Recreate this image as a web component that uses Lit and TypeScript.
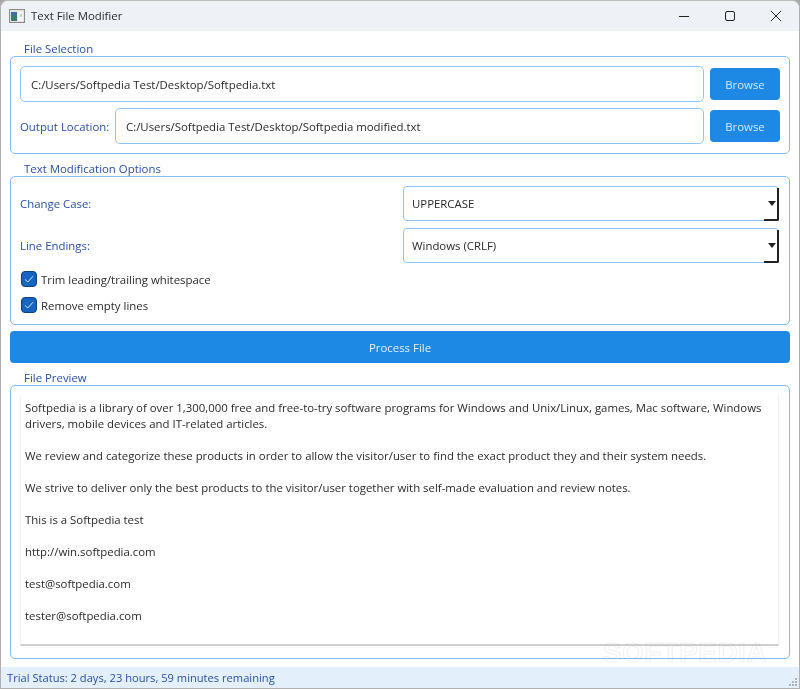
import { LitElement, html, css } from 'lit';
import { customElement } from 'lit/decorators.js';

const check = html`<svg width="16" height="16" viewBox="0 0 16 16"><path d="M4 8.4 L6.8 11 L12 5.2" fill="none" stroke="#cfe4f8" stroke-width="1"/></svg>`;
const arrow = html`<svg class="arrow" width="8" height="5" viewBox="0 0 8 5"><path d="M0 0 H8 L4 5 Z" fill="#222"/></svg>`;

@customElement('app-root')
export class AppRoot extends LitElement {
  static styles = css`
    :host {
      display: block;
      width: 800px;
      height: 689px;
      background: #a9a9a9;
      font-family: "Open Sans", "Noto Sans", sans-serif;
      font-size: 11.4px;
      color: #2b2b33;
    }
    .window {
      position: relative;
      box-sizing: border-box;
      height: 689px;
      display: flex;
      flex-direction: column;
      background: #fff;
      border: 1px solid #b0b0b0;
      border-top-color: #bdbdbd;
      border-radius: 8px 8px 0 0;
      overflow: hidden;
    }
    .titlebar {
      box-sizing: border-box;
      height: 30px;
      flex: none;
      display: flex;
      align-items: center;
      background: #eef2f6;
      padding-left: 8px;
    }
    .app-icon { margin-right: 6px; }
    .title { color: #2a2a2a; position: relative; top: -1px; }
    .controls { margin-left: auto; display: flex; }
    .controls svg { display: block; width: 46px; height: 30px; }
    .content {
      flex: 1;
      display: flex;
      flex-direction: column;
      padding: 11px 9px 0;
      min-height: 0;
    }
    .legend {
      height: 14px;
      line-height: 13px;
      padding-left: 14px;
      color: #2a4fa0;
    }
    .group {
      box-sizing: border-box;
      border: 1px solid #7fbdf5;
      border-radius: 5px;
      padding: 9px;
    }
    .files { height: 98px; display: flex; flex-direction: column; gap: 6px; margin-bottom: 8px; }
    .row { display: flex; align-items: center; }
    .field {
      box-sizing: border-box;
      flex: 1;
      height: 36px;
      line-height: 36px;
      padding-left: 10px;
      border: 1px solid #8cc6f8;
      border-radius: 5px;
      color: #2a2a2a;
    }
    .label { color: #2a4fa0; }
    .out-label { width: 95px; flex: none; }
    .browse {
      flex: none;
      width: 70px;
      height: 32px;
      margin-left: 6px;
      font: inherit;
      border: none;
      border-radius: 4px;
      background: #1e88e5;
      color: #d3e9fb;
    }
    .options { height: 149px; margin-bottom: 6px; padding-bottom: 0; }
    .choice { height: 35px; margin-bottom: 7px; justify-content: space-between; }
    .choice.last { margin-bottom: 3px; }
    .combo {
      position: relative;
      box-sizing: border-box;
      width: 376px;
      height: 35px;
      line-height: 33px;
      padding-left: 8px;
      margin-right: 1px;
      border: 1px solid #8cc6f8;
      border-radius: 4px;
      color: #2a2a2a;
    }
    .combo::after {
      content: "";
      position: absolute;
      right: -1px;
      bottom: -1px;
      width: 15px;
      height: 33px;
      border-right: 2px solid #222;
      border-bottom: 2px solid #222;
      border-bottom-right-radius: 2px;
      box-sizing: border-box;
    }
    .arrow { position: absolute; right: 2px; top: 14px; }
    .check { height: 26px; display: flex; align-items: center; gap: 4px; padding-left: 1px; color: #2a2a2a; }
    .box {
      box-sizing: border-box;
      width: 16px;
      height: 16px;
      border-radius: 4px;
      background: #1565c0;
      border: 1px solid #123f78;
    }
    .box svg { display: block; margin: -1px; }
    .process {
      flex: none;
      height: 32px;
      font: inherit;
      border: none;
      border-radius: 4px;
      background: #1e88e5;
      color: #e4f1fc;
      margin-bottom: 8px;
    }
    .preview { flex: 1; min-height: 0; margin-bottom: 8px; }
    .textarea {
      box-sizing: border-box;
      height: 251px;
      padding: 5px 0 0 4px;
      margin-right: 1px;
      border-left: 1px solid #f2f2f2;
      border-right: 1px solid #f2f2f2;
      border-bottom: 2px solid #d0d0d0;
      line-height: 16px;
      color: #2a2a2a;
    }
    .textarea p { margin: 0 0 16px; }
    .status {
      flex: none;
      position: relative;
      height: 21px;
      line-height: 22px;
      padding-left: 6px;
      font-size: 11.15px;
      background: #e3f0fb;
      color: #2a4fa0;
    }
    .grip { position: absolute; right: 1px; bottom: 1px; }
    .watermark {
      position: absolute;
      left: 602px;
      top: 637px;
      font-family: "Liberation Sans", sans-serif;
      font-size: 28px;
      font-weight: 700;
      letter-spacing: 0.4px;
      color: #fdfdfd;
      -webkit-text-stroke: 1px #f2f2f2;
      mix-blend-mode: multiply;
      line-height: 30px;
      pointer-events: none;
    }
  `;

  render() {
    return html`
      <div class="window">
        <div class="titlebar">
          <svg class="app-icon" width="16" height="14" viewBox="0 0 16 14">
            <rect x="0.5" y="0.5" width="15" height="13" fill="#e4e4e4" stroke="#8a8a8a"/>
            <rect x="2" y="3" width="6" height="9" fill="#3d7a72"/>
            <rect x="2" y="3" width="6" height="3" fill="#3f6fa8"/>
            <rect x="9" y="3" width="5" height="9" fill="#f6f6f6"/>
            <rect x="11" y="5" width="2" height="3" fill="#b9d2c4"/>
          </svg>
          <span class="title">Text File Modifier</span>
          <div class="controls">
            <svg viewBox="0 0 46 30"><path d="M18 15.5 H28" stroke="#222" fill="none"/></svg>
            <svg viewBox="0 0 46 30"><rect x="18.5" y="10.5" width="9" height="9" rx="1.5" stroke="#222" fill="none"/></svg>
            <svg viewBox="0 0 46 30"><path d="M18 10 L28 20 M28 10 L18 20" stroke="#222" fill="none"/></svg>
          </div>
        </div>
        <div class="content">
          <div class="legend">File Selection</div>
          <div class="group files">
            <div class="row">
              <div class="field">C:/Users/Softpedia Test/Desktop/Softpedia.txt</div>
              <button class="browse">Browse</button>
            </div>
            <div class="row">
              <span class="label out-label">Output Location:</span>
              <div class="field">C:/Users/Softpedia Test/Desktop/Softpedia modified.txt</div>
              <button class="browse">Browse</button>
            </div>
          </div>
          <div class="legend">Text Modification Options</div>
          <div class="group options">
            <div class="row choice">
              <span class="label">Change Case:</span>
              <div class="combo">UPPERCASE${arrow}</div>
            </div>
            <div class="row choice last">
              <span class="label">Line Endings:</span>
              <div class="combo">Windows (CRLF)${arrow}</div>
            </div>
            <div class="check"><span class="box">${check}</span>Trim leading/trailing whitespace</div>
            <div class="check"><span class="box">${check}</span>Remove empty lines</div>
          </div>
          <button class="process">Process File</button>
          <div class="legend">File Preview</div>
          <div class="group preview">
            <div class="textarea">
              <p>Softpedia is a library of over 1,300,000 free and free-to-try software programs for Windows and Unix/Linux, games, Mac software, Windows<br>drivers, mobile devices and IT-related articles.</p>
              <p>We review and categorize these products in order to allow the visitor/user to find the exact product they and their system needs.</p>
              <p>We strive to deliver only the best products to the visitor/user together with self-made evaluation and review notes.</p>
              <p>This is a Softpedia test</p>
              <p>http://win.softpedia.com</p>
              <p>test@softpedia.com</p>
              <p>tester@softpedia.com</p>
            </div>
          </div>
        </div>
        <div class="status">
          Trial Status: 2 days, 23 hours, 59 minutes remaining
          <svg class="grip" width="10" height="10" viewBox="0 0 10 10" fill="#a8b4be">
            <rect x="7" y="1" width="2" height="2"/><rect x="4" y="4" width="2" height="2"/><rect x="7" y="4" width="2" height="2"/>
            <rect x="1" y="7" width="2" height="2"/><rect x="4" y="7" width="2" height="2"/><rect x="7" y="7" width="2" height="2"/>
          </svg>
        </div>
        <div class="watermark">SOFTPEDIA</div>
      </div>
    `;
  }
}
